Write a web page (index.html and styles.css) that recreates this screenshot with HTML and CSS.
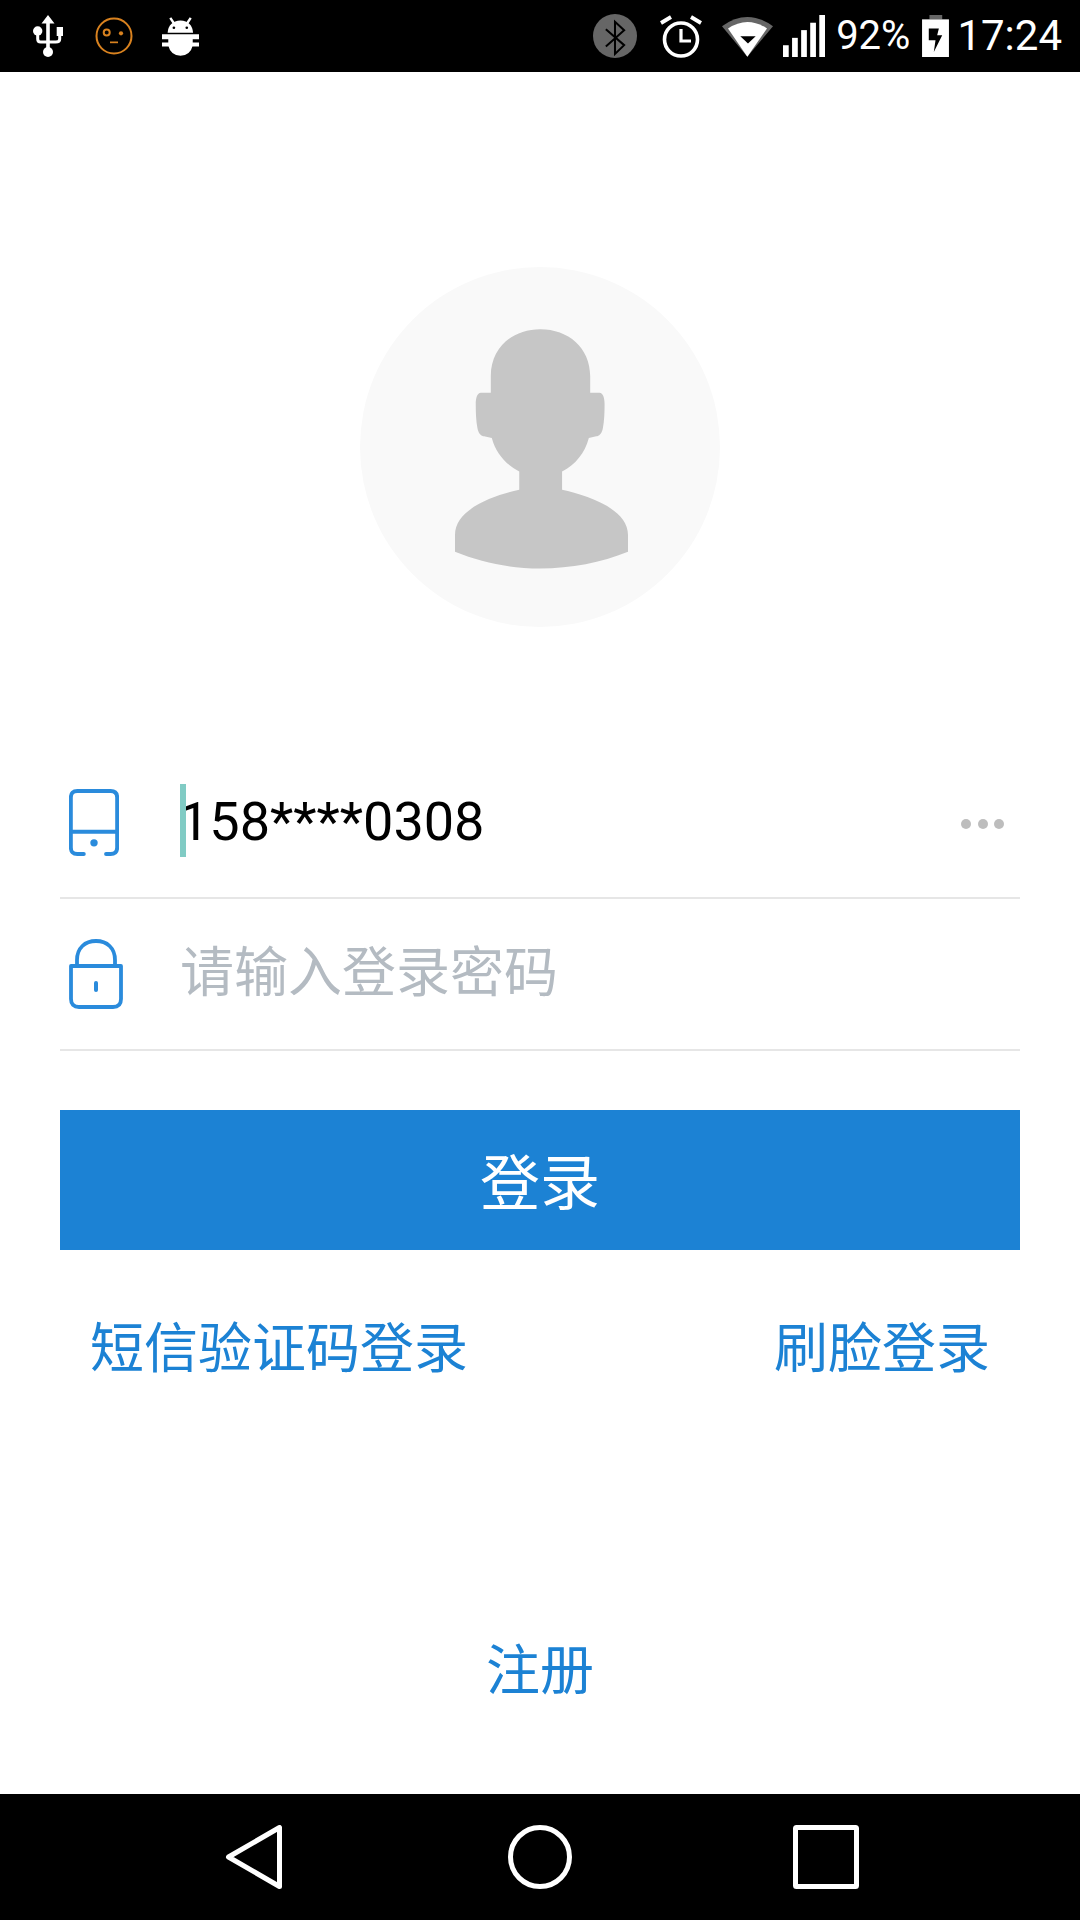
FILE: index.html
```html
<!DOCTYPE html>
<html lang="zh-CN">
<head>
<meta charset="utf-8">
<title>登录</title>
<link rel="stylesheet" href="styles.css">
</head>
<body>
<div class="screen">
  <header class="status-bar">
    <div class="status-group left">
      <svg class="ic usb" viewBox="0 0 30 42"><g fill="#fff"><path d="M15 0l6.500 8.500h-4.700V36h-3.600V8.500H8.500z"/><circle cx="15" cy="37" r="5"/><circle cx="4.700" cy="16" r="4.700"/><rect x="23.700" y="12" width="6.300" height="9"/></g><path d="M4.700 18v6q0 3 3 3h15q4 0 4-3v-5" fill="none" stroke="#fff" stroke-width="3"/></svg>
      <svg class="ic face" viewBox="0 0 38 38"><g fill="none" stroke="#d9821f" stroke-width="2"><circle cx="19" cy="19" r="17.500"/><circle cx="11.700" cy="15.600" r="3"/></g><circle cx="26" cy="16.300" r="2.100" fill="#d9821f"/><rect x="15" y="24.500" width="8" height="1.700" fill="#d9821f"/></svg>
      <svg class="ic bug" viewBox="0 0 112 117"><g fill="#fff"><path d="M17 47Q20 12 56 10q35 2 38 37z"/><path d="M28 0l12 18-6 4L22 4zM84 0L72 18l6 4L90 4z"/><path d="M0 52h112v15H93v10h19v12H92q-6 26-36 28-30-2-36-28H0V77h19V67H0z"/></g><circle cx="36" cy="32" r="4" fill="#000"/><circle cx="75" cy="32" r="4" fill="#000"/></svg>
    </div>
    <div class="status-group right">
      <svg class="ic bt" viewBox="0 0 130 130"><circle cx="65" cy="65" r="65" fill="#666"/><path d="M38 45l54 47-27 26V23l27 25-54 48" fill="none" stroke="#000" stroke-width="6"/></svg>
      <svg class="ic alarm" viewBox="0 0 42 43"><g fill="none" stroke="#fff"><circle cx="21" cy="24.500" r="16.500" stroke-width="3.600"/><path d="M21 14v12h10" stroke-width="3.200"/><path d="M1 8l10-6M41 8L31 2" stroke-width="3.800"/></g></svg>
      <svg class="ic wifi" viewBox="0 0 153 125"><path d="M0 33Q76-22 153 33L76 125z" fill="#666"/><path d="M18 40Q76 1 135 40L76 125z" fill="#fff"/><path d="M55 63h46L78 85z" fill="#000"/></svg>
      <svg class="ic signal" viewBox="0 0 125 125"><g fill="#fff"><rect x="0" y="90" width="17" height="35"/><rect x="27" y="68" width="17" height="57"/><rect x="54" y="45" width="17" height="80"/><rect x="81" y="23" width="17" height="102"/><rect x="108" y="0" width="17" height="125"/></g></svg>
      <span class="stat-text pct">92%</span>
      <svg class="ic battery" viewBox="0 0 80 125"><rect x="22" y="0" width="38" height="13" fill="#666"/><rect x="0" y="13" width="80" height="112" fill="#fff"/><path d="M20 40h30l-5 20h15L35 110l5-35H20z" fill="#000"/></svg>
      <span class="stat-text time">17:24</span>
    </div>
  </header>

  <main class="content">
    <div class="avatar">
      <svg class="avatar-figure" viewBox="0 0 520 716"><path fill="#c6c6c6" d="M110 140C110 55 175 0 258 0s149 55 149 140v50h28c10 0 15 15 15 35 0 25-1 50-5 70-3 17-12 25-20 25l-22 5c-12 45-40 80-80 100v55c70 15 197 55 197 135v50c-80 32-170 50-262 50S83 697 3 665v-50c0-80 122-120 192-135v-55c-40-20-70-55-82-100l-23-5c-8 0-17-8-20-25-4-20-5-45-5-70 0-20 5-35 15-35h30z"/></svg>
    </div>

    <form class="form">
      <div class="field">
        <svg class="field-icon" viewBox="0 0 54 72"><path fill="none" stroke="#2a8bdc" stroke-width="4.200" stroke-linecap="round" stroke-linejoin="round" d="M16 70H9q-7 0-7-7V9q0-7 7-7h36q7 0 7 7v54q0 7-7 7h-5M2 46h50"/><circle cx="27" cy="58" r="4" fill="#2a8bdc"/></svg>
        <span class="value"><span class="caret"></span>158****0308</span>
        <span class="more"><i></i><i></i><i></i></span>
      </div>
      <div class="field">
        <svg class="field-icon lock" viewBox="0 0 54 70"><path fill="none" stroke="#2a8bdc" stroke-width="3.800" stroke-linejoin="round" d="M2 27h50v33q0 8-8 8H10q-8 0-8-8zM8 27v-6C8 9 16 2 27 2s19 7 19 19v6"/><rect x="25" y="42" width="4" height="11" rx="2" fill="#2a8bdc"/></svg>
        <span class="placeholder">请输入登录密码</span>
      </div>
      <button class="submit" type="button">登录</button>
    </form>

    <nav class="alt-links">
      <a>短信验证码登录</a>
      <a>刷脸登录</a>
    </nav>
    <a class="register">注册</a>
  </main>

  <footer class="nav-bar">
    <svg class="nav-ic" viewBox="0 0 64 64"><path d="M5.500 32L56.500 2.500v59z" fill="none" stroke="#fff" stroke-width="5" stroke-linejoin="round"/></svg>
    <svg class="nav-ic" viewBox="0 0 64 64"><circle cx="32" cy="32" r="29.500" fill="none" stroke="#fff" stroke-width="5"/></svg>
    <svg class="nav-ic wide" viewBox="0 0 66 64"><rect x="2.500" y="2.500" width="61" height="59" rx="1" fill="none" stroke="#fff" stroke-width="5"/></svg>
  </footer>
</div>
</body>
</html>
```
FILE: styles.css
```css
* { box-sizing: border-box; }

html, body {
  margin: 0;
  padding: 0;
  background: #fff;
}

.screen {
  width: 1080px;
  height: 1920px;
  display: flex;
  flex-direction: column;
  overflow: hidden;
  font-family: "Noto Sans CJK SC", "Noto Sans", sans-serif;
}

/* Status bar */
.status-bar {
  height: 72px;
  flex: none;
  background: #000;
  display: flex;
  align-items: center;
  justify-content: space-between;
  padding: 0 18px 0 33px;
}

.status-group {
  display: flex;
  align-items: center;
}

.ic { display: block; flex: none; }
.usb { width: 30px; height: 42px; }
.face { width: 38px; height: 38px; margin-left: 32px; }
.bug { width: 37px; height: 39px; margin-left: 29px; }
.bt { width: 44px; height: 44px; }
.alarm { width: 42px; height: 43px; margin-left: 23px; }
.wifi { width: 51px; height: 42px; margin-left: 20px; }
.signal { width: 42px; height: 42px; margin-left: 10px; }
.battery { width: 27px; height: 42px; margin-left: 12px; }

.stat-text {
  color: #fff;
  font-family: Roboto, sans-serif;
  line-height: 44px;
}

.pct { font-size: 40px; margin-left: 11px; }
.time { font-size: 42px; margin-left: 8px; }

/* Login content */
.content {
  flex: 1;
  display: flex;
  flex-direction: column;
  align-items: center;
  padding-top: 195px;
}

.avatar {
  width: 360px;
  height: 360px;
  border-radius: 50%;
  background: #f9f9f9;
  display: flex;
  align-items: center;
  justify-content: center;
  padding: 4px 0 0 2px;
}

.avatar-figure { width: 174px; height: 240px; }

.form {
  width: 960px;
  margin-top: 120px;
  display: flex;
  flex-direction: column;
}

.field {
  height: 152px;
  display: flex;
  align-items: center;
  border-bottom: 2px solid #e6e6e6;
  padding-left: 9px;
}

.field-icon { width: 50px; height: 67px; flex: none; }
.field-icon.lock { width: 54px; height: 70px; }

.value {
  display: flex;
  align-items: center;
  position: relative;
  margin-left: 60px;
  padding-bottom: 2px;
  font-family: Roboto, sans-serif;
  font-size: 54px;
  color: #000;
}

.caret {
  position: absolute;
  left: 1px;
  top: 50%;
  width: 6px;
  height: 73px;
  margin-top: -38px;
  background: #80cbc4;
}

.placeholder {
  margin-left: 57px;
  padding-bottom: 12px;
  font-size: 54px;
  color: #b4bbc2;
}

.more {
  margin-left: auto;
  margin-right: 16px;
  margin-top: 4px;
  display: flex;
  gap: 6.500px;
}

.more i {
  display: block;
  width: 10px;
  height: 10px;
  border-radius: 50%;
  background: #bdbdbd;
}

.submit {
  margin-top: 59px;
  height: 140px;
  padding: 0 0 4px;
  border: 0;
  background: #1c82d4;
  color: #fff;
  font: inherit;
  font-size: 60px;
}

.alt-links {
  width: 960px;
  margin-top: 55px;
  padding: 0 30px;
  display: flex;
  justify-content: space-between;
  font-size: 54px;
  color: #1c82d4;
}

.register {
  margin-top: 243px;
  font-size: 54px;
  color: #1c82d4;
}

/* Navigation bar */
.nav-bar {
  height: 126px;
  flex: none;
  background: #000;
  display: flex;
  justify-content: center;
  gap: 221px;
  padding: 31px 0 0 2px;
}

.nav-ic { width: 64px; height: 64px; }
.nav-ic.wide { width: 66px; }
```
